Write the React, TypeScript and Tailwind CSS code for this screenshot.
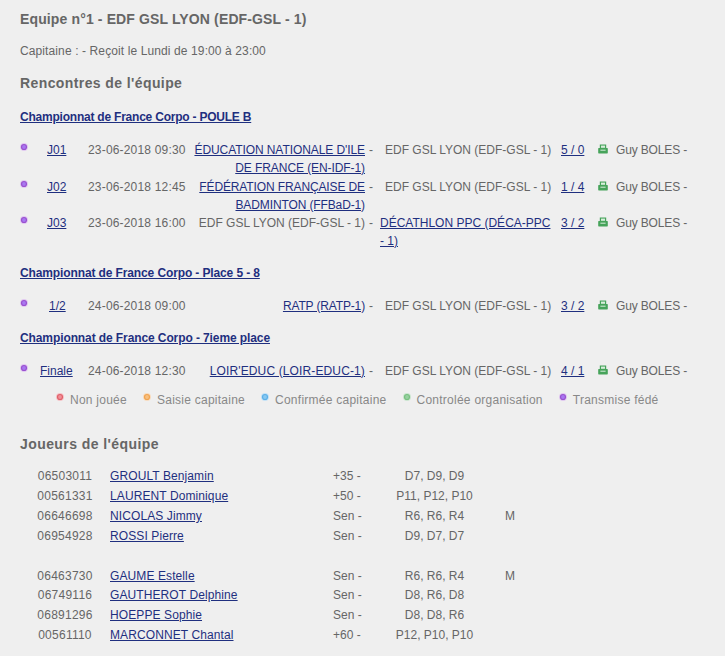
const LINK = "text-[#1f2f7f] underline";

function Dot({ color, core, halo, className = "" }: { color: string; core: string; halo: string; className?: string }) {
  return (
    <svg width="8" height="8" viewBox="0 0 8 8" className={className}>
      <circle cx="4" cy="4" r="4" fill={halo} />
      <circle cx="4" cy="4" r="3.1" fill={color} />
      <circle cx="4" cy="4" r="1.9" fill={core} />
    </svg>
  );
}

function Printer() {
  return (
    <svg width="10" height="10" viewBox="0 0 10 10" className="block">
      <path d="M1.8 0.5h6.4v4h-6.4z" fill="#46a35a" />
      <path d="M3 1.6h4v2.2h-4z" fill="#d8eedc" />
      <path d="M0.8 4h8.4a.6.6 0 0 1 .6.6v4.2a.6.6 0 0 1-.6.6h-8.4a.6.6 0 0 1-.6-.6v-4.2a.6.6 0 0 1 .6-.6z" fill="#46a35a" />
      <path d="M2.4 6.2h5.2" stroke="#d8eedc" strokeWidth="1" />
    </svg>
  );
}

type Match = {
  round: string;
  date: string;
  left: string[];
  leftLink: boolean;
  leftTrack?: string;
  right: string[];
  rightLink: boolean;
  score: string;
  roundPad: string;
  tall?: boolean;
};

function MatchRow({ m }: { m: Match }) {
  return (
    <div className={`grid grid-cols-[68px_107px_170px_15px_181px_37px_18px_auto] items-start leading-[18px] ${m.tall ? "h-[36.5px]" : ""}`}>
      <div className="flex items-start">
        <Dot color="#9a50d0" core="#a878f0" halo="#e0c8f0" className="mt-[2px] shrink-0" />
        <a className={`${LINK} ${m.roundPad}`}>{m.round}</a>
      </div>
      <div className="tracking-[0.18px]">{m.date}</div>
      <div className={`flex flex-col items-end whitespace-nowrap ${m.leftTrack ?? ""}`}>
        {m.left.map((l) => (
          <span key={l} className={m.leftLink ? LINK : ""}>
            {l}
          </span>
        ))}
      </div>
      <div className="pl-[4px]">-</div>
      <div className={`flex flex-col items-start whitespace-nowrap ${m.rightLink ? "" : "pl-[5px]"}`}>
        {m.right.map((l) => (
          <span key={l} className={m.rightLink ? LINK : ""}>
            {l}
          </span>
        ))}
      </div>
      <a className={LINK + " justify-self-start"}>{m.score}</a>
      <div className="pt-[3px]">
        <Printer />
      </div>
      <div className="tracking-[-0.15px]">Guy BOLES -</div>
    </div>
  );
}

function Section({ title, className = "" }: { title: string; className?: string }) {
  return <a className={`block font-bold text-[12px] leading-[18px] ${LINK} ${className}`}>{title}</a>;
}

const TEAM = "EDF GSL LYON (EDF-GSL - 1)";

const PLAYERS1 = [
  ["06503011", "GROULT Benjamin", "+35 -", "D7, D9, D9", ""],
  ["00561331", "LAURENT Dominique", "+50 -", "P11, P12, P10", ""],
  ["06646698", "NICOLAS Jimmy", "Sen -", "R6, R6, R4", "M"],
  ["06954928", "ROSSI Pierre", "Sen -", "D9, D7, D7", ""],
];
const PLAYERS2 = [
  ["06463730", "GAUME Estelle", "Sen -", "R6, R6, R4", "M"],
  ["06749116", "GAUTHEROT Delphine", "Sen -", "D8, R6, D8", ""],
  ["06891296", "HOEPPE Sophie", "Sen -", "D8, D8, R6", ""],
  ["00561110", "MARCONNET Chantal", "+60 -", "P12, P10, P10", ""],
];

function PlayerRow({ p, short }: { p: string[]; short?: boolean }) {
  return (
    <div className={`grid grid-cols-[90px_223px_60px_83px_auto] leading-[20px] ${short ? "h-[19px]" : "h-[20px]"}`}>
      <div className="text-center tracking-[0.25px]">{p[0]}</div>
      <a className={`${LINK} justify-self-start tracking-[0.1px]`}>{p[1]}</a>
      <div>{p[2]}</div>
      <div className="text-center">{p[3]}</div>
      <div className="pl-[29px]">{p[4]}</div>
    </div>
  );
}

const LEGEND = [
  ["Non jouée", "#e0606a", "#f09098", "#f4c4c8"],
  ["Saisie capitaine", "#f0a450", "#f8c080", "#f8dcc0"],
  ["Confirmée capitaine", "#5cb0e8", "#88c8f0", "#c4e2f6"],
  ["Controlée organisation", "#78c080", "#98d0a0", "#cce6d0"],
  ["Transmise fédé", "#9a50d0", "#a878f0", "#e0c8f0"],
];

export default function App() {
  return (
    <div className="min-h-[656px] w-[725px] overflow-hidden bg-[#efefef] pl-[20px] pt-[10px] text-[12px] text-[#666666] [font-family:'Liberation_Sans',Arial,sans-serif]">
      <h1 className="text-[14px] font-bold leading-[18px] tracking-[0.13px]">Equipe n°1 - EDF GSL LYON (EDF-GSL - 1)</h1>
      <p className="mt-[14px] leading-[18px] tracking-[0.11px]">Capitaine : - Reçoit le Lundi de 19:00 à 23:00</p>
      <h2 className="mt-[14px] text-[14px] font-bold leading-[18px] tracking-[0.4px]">Rencontres de l'équipe</h2>
      <Section title="Championnat de France Corpo - POULE B" className="mt-[16px] tracking-[-0.22px]" />
      <div className="mt-[15px]">
        <MatchRow m={{ round: "J01", roundPad: "ml-[19px]", date: "23-06-2018 09:30", left: ["ÉDUCATION NATIONALE D'ILE", "DE FRANCE (EN-IDF-1)"], leftLink: true, leftTrack: "tracking-[-0.08px]", right: [TEAM], rightLink: false, score: "5 / 0", tall: true }} />
        <MatchRow m={{ round: "J02", roundPad: "ml-[19px]", date: "23-06-2018 12:45", left: ["FÉDÉRATION FRANÇAISE DE", "BADMINTON (FFBaD-1)"], leftLink: true, leftTrack: "tracking-[-0.12px]", right: [TEAM], rightLink: false, score: "1 / 4", tall: true }} />
        <MatchRow m={{ round: "J03", roundPad: "ml-[19px]", date: "23-06-2018 16:00", left: [TEAM], leftLink: false, right: ["DÉCATHLON PPC (DÉCA-PPC", "- 1)"], rightLink: true, score: "3 / 2", tall: true }} />
      </div>
      <Section title="Championnat de France Corpo - Place 5 - 8" className="mt-[13px] tracking-[-0.12px]" />
      <div className="mt-[15px]">
        <MatchRow m={{ round: "1/2", roundPad: "ml-[21px]", date: "24-06-2018 09:00", left: ["RATP (RATP-1)"], leftLink: true, leftTrack: "tracking-[-0.15px]", right: [TEAM], rightLink: false, score: "3 / 2" }} />
      </div>
      <Section title="Championnat de France Corpo - 7ieme place" className="mt-[14px] tracking-[-0.1px]" />
      <div className="mt-[15px]">
        <MatchRow m={{ round: "Finale", roundPad: "ml-[12px]", date: "24-06-2018 12:30", left: ["LOIR'EDUC (LOIR-EDUC-1)"], leftLink: true, leftTrack: "tracking-[0.13px]", right: [TEAM], rightLink: false, score: "4 / 1" }} />
      </div>
      <div className="mt-[11px] ml-[36px] flex gap-[16px] leading-[18px] tracking-[0.25px] text-[#888888]">
        {LEGEND.map(([t, c, k, h]) => (
          <div key={t} className="flex items-start gap-[6px]">
            <Dot color={c} core={k} halo={h} className="mt-[2px]" />
            <span>{t}</span>
          </div>
        ))}
      </div>
      <h2 className="mt-[26px] text-[14px] font-bold leading-[18px] tracking-[0.42px]">Joueurs de l'équipe</h2>
      <div className="mt-[13.5px]">
        {PLAYERS1.map((p) => (
          <PlayerRow key={p[0]} p={p} />
        ))}
        <div className="h-[20px]" />
        {PLAYERS2.map((p, i) => (
          <PlayerRow key={p[0]} p={p} short={i === 0} />
        ))}
      </div>
    </div>
  );
}
